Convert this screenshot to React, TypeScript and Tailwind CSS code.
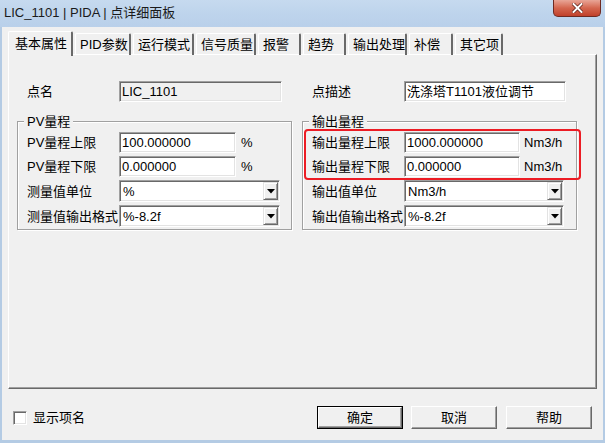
import React from "react";

const font = { fontFamily: '"Liberation Sans", "Noto Sans CJK SC", sans-serif' };

const tabs = [
  { label: "基本属性", w: "w-[65px]" },
  { label: "PID参数", w: "w-[56px]" },
  { label: "运行模式", w: "w-[61px]" },
  { label: "信号质量", w: "w-[60px]" },
  { label: "报警", w: "w-[43px]" },
  { label: "趋势", w: "w-[43px]" },
  { label: "输出处理", w: "w-[59px]" },
  { label: "补偿", w: "w-[44px]" },
  { label: "其它项", w: "w-[48px]" },
];

const sunken =
  "border border-t-[#a0a0a0] border-l-[#a0a0a0] border-b-white border-r-white shadow-[inset_1px_1px_0_#696969,inset_-1px_-1px_0_#e3e3e3]";

function TextBox({ value, w, readOnly }: { value: string; w: string; readOnly?: boolean }) {
  return (
    <div className={`${w} h-[21px] ${sunken} ${readOnly ? "bg-[#f0f0f0]" : "bg-white"} flex items-center pl-[2px] text-[13px] text-black leading-none`}>
      {value}
    </div>
  );
}

function Select({ value, w }: { value: string; w: string }) {
  return (
    <div className={`${w} h-[22px] ${sunken} bg-white flex items-center text-[13px] text-black leading-none`}>
      <span className="flex-1 pl-[3px]">{value}</span>
      <div className="mr-[1px] w-[15px] h-[18px] bg-[#f0f0f0] border border-t-[#e3e3e3] border-l-[#e3e3e3] border-b-[#696969] border-r-[#696969] shadow-[inset_1px_1px_0_#ffffff,inset_-1px_-1px_0_#a0a0a0] flex items-center justify-center">
        <svg width="8" height="5" viewBox="0 0 8 5">
          <polygon points="0,0 8,0 4,4.5" fill="#000" />
        </svg>
      </div>
    </div>
  );
}

function Row({ label, children }: { label: string; children: React.ReactNode }) {
  return (
    <div className="flex items-center">
      <div className="w-[101px] pl-[9px] text-[13px] text-black leading-none whitespace-nowrap">{label}</div>
      {children}
    </div>
  );
}

function Group({ title, children, mark }: { title: string; children: React.ReactNode; mark?: boolean }) {
  return (
    <div className="relative mt-[20px] h-[109px] border border-[#a0a0a0] shadow-[inset_1px_1px_0_#ffffff,1px_1px_0_#ffffff]">
      <span className="absolute left-[6px] -top-[8px] bg-[#f0f0f0] px-[3px] text-[13px] leading-[15px] text-black">{title}</span>
      <div className="flex flex-col gap-[3px] pt-[10px]">{children}</div>
      {mark && (
        <div className="absolute left-[1px] top-[7px] w-[277px] h-[51px] border-2 border-[#ec1c24] rounded-[4px]" />
      )}
    </div>
  );
}

function Button({ label, def }: { label: string; def?: boolean }) {
  return (
    <div className={`w-[86px] h-[23px] ${def ? "border border-black" : ""}`}>
      <div className="w-full h-full bg-[#f0f0f0] border border-t-white border-l-white border-b-[#696969] border-r-[#696969] shadow-[inset_-1px_-1px_0_#a0a0a0] flex items-center justify-center text-[13px] text-black leading-none">
        {label}
      </div>
    </div>
  );
}

export default function App() {
  return (
    <div className="w-[605px] h-[443px] flex flex-col bg-[#b4cbe4] overflow-hidden" style={font}>
      {/* title bar */}
      <div className="h-[27px] flex items-start justify-between bg-gradient-to-b from-[#c6daef] via-[#bed4ec] to-[#b9d0ea]">
        <div className="pl-[4px] pt-[5px] text-[13px] leading-[15px] text-[#1a1a1a]">LIC_1101 | PIDA | 点详细面板</div>
        <div className="mr-[4px] w-[48px] h-[17px] rounded-b-[5px] border border-t-0 border-[#6e2a22] bg-gradient-to-b from-[#e8a597] via-[#d4664f] to-[#c0402a] flex items-center justify-center">
          <svg width="11" height="10" viewBox="0 0 11 10">
            <path d="M1.5 1 L9.5 9 M9.5 1 L1.5 9" stroke="#5a1a12" strokeWidth="3.4" strokeLinecap="square" />
            <path d="M1.5 1 L9.5 9 M9.5 1 L1.5 9" stroke="#ffffff" strokeWidth="2" strokeLinecap="square" />
          </svg>
        </div>
      </div>

      {/* body */}
      <div className="flex-1 mx-[2px] mb-[3px] bg-[#f0f0f0] flex flex-col">
        <div className="px-[6px] pt-[3px]">
          {/* tabs */}
          <div className="flex items-end h-[25px] pl-[2px]">
            {tabs.map((t, i) =>
              i === 0 ? (
                <div
                  key={t.label}
                  className={`${t.w} relative z-10 h-[25px] -mb-[1px] -ml-[2px] bg-[#f0f0f0] border-t border-l border-white border-r-2 border-r-[#696969] rounded-t-[2px] flex items-center pl-[6px] pb-[2px] text-[13px] text-black leading-none whitespace-nowrap`}
                >
                  {t.label}
                </div>
              ) : (
                <div
                  key={t.label}
                  className={`${t.w} ml-[2px] h-[22px] border-t border-l border-white border-r-2 border-r-[#696969] rounded-t-[2px] flex items-center pl-[4px] text-[13px] text-black leading-none whitespace-nowrap`}
                >
                  {t.label}
                </div>
              )
            )}
          </div>
          {/* panel */}
          <div className="h-[335px] -mt-[1px] border border-t-white border-l-white border-b-[#696969] border-r-[#696969] shadow-[inset_-1px_-1px_0_#a0a0a0] pt-[26px] pl-[8px]">
            <div className="grid grid-cols-[275px_275px] gap-x-[10px]">
              <div>
                <div className="flex items-center h-[20px]">
                  <div className="w-[102px] pl-[10px] text-[13px] text-black leading-none">点名</div>
                  <TextBox value="LIC_1101" w="w-[163px]" readOnly />
                </div>
                <Group title="PV量程">
                  <Row label="PV量程上限">
                    <TextBox value="100.000000" w="w-[117px]" />
                    <span className="ml-[5px] text-[13px] text-black leading-none">%</span>
                  </Row>
                  <Row label="PV量程下限">
                    <TextBox value="0.000000" w="w-[117px]" />
                    <span className="ml-[5px] text-[13px] text-black leading-none">%</span>
                  </Row>
                  <Row label="测量值单位">
                    <Select value="%" w="w-[161px]" />
                  </Row>
                  <Row label="测量值输出格式">
                    <Select value="%-8.2f" w="w-[161px]" />
                  </Row>
                </Group>
              </div>
              <div>
                <div className="flex items-center h-[20px]">
                  <div className="w-[102px] pl-[10px] text-[13px] text-black leading-none">点描述</div>
                  <TextBox value="洗涤塔T1101液位调节" w="w-[162px]" />
                </div>
                <Group title="输出量程" mark>
                  <Row label="输出量程上限">
                    <TextBox value="1000.000000" w="w-[116px]" />
                    <span className="ml-[4px] text-[13px] text-black leading-none">Nm3/h</span>
                  </Row>
                  <Row label="输出量程下限">
                    <TextBox value="0.000000" w="w-[116px]" />
                    <span className="ml-[4px] text-[13px] text-black leading-none">Nm3/h</span>
                  </Row>
                  <Row label="输出值单位">
                    <Select value="Nm3/h" w="w-[160px]" />
                  </Row>
                  <Row label="输出值输出格式">
                    <Select value="%-8.2f" w="w-[160px]" />
                  </Row>
                </Group>
              </div>
            </div>
          </div>
        </div>

        {/* bottom bar */}
        <div className="flex-1 flex items-center justify-between pl-[11px] pr-[11px] pt-[6px]">
          <div className="flex items-center gap-[6px]">
            <div className={`w-[14px] h-[14px] bg-white ${sunken}`} />
            <span className="text-[13px] text-black leading-none">显示项名</span>
          </div>
          <div className="flex items-center">
            <Button label="确定" def />
            <div className="ml-[8px]">
              <Button label="取消" />
            </div>
            <div className="ml-[9px]">
              <Button label="帮助" />
            </div>
          </div>
        </div>
      </div>
    </div>
  );
}
